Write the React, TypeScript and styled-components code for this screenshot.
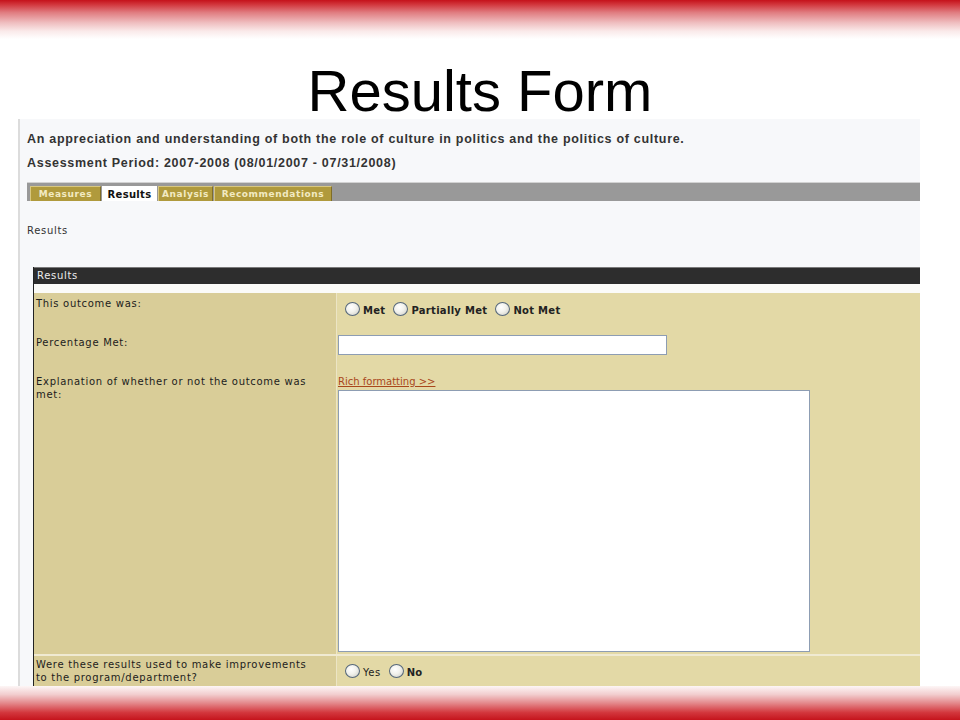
import React from "react";
import styled, { createGlobalStyle } from "styled-components";

const Global = createGlobalStyle`
  html, body { margin: 0; padding: 0; background: #ffffff; }
  body { font-family: "Liberation Sans", Arial, sans-serif; }
`;

const Page = styled.div`
  width: 960px;
  height: 720px;
  display: flex;
  flex-direction: column;
  overflow: hidden;
  background: #ffffff;
`;

const TopBand = styled.div`
  flex: 0 0 39px;
  background: linear-gradient(
    to bottom,
    #c5121b 0%,
    #d2383e 12%,
    #e07c80 32%,
    #efbdbf 58%,
    #faeaea 80%,
    #ffffff 100%
  );
`;

const BottomBand = styled.div`
  flex: 0 0 34px;
  background: linear-gradient(
    to bottom,
    #fdf6f6 0%,
    #f2cdce 25%,
    #e4898c 50%,
    #d3373d 78%,
    #c5141c 100%
  );
`;

const Title = styled.h1`
  margin: 0;
  padding-top: 24px;
  height: 56px;
  line-height: 56px;
  text-align: center;
  font-family: "Liberation Sans", Arial, sans-serif;
  font-weight: normal;
  font-size: 58px;
  color: #000;
`;

const Panel = styled.div`
  flex: 1;
  min-height: 0;
  overflow: hidden;
  margin: 0 40px 0 18px;
  background: #f7f8fa;
  border-left: 2px solid #dcdcdc;
  padding-top: 12px;
`;

const Heading = styled.div<{ $gap?: number }>`
  margin-top: ${(p) => p.$gap ?? 0}px;
  padding-left: 7px;
  font-family: "Liberation Sans", Arial, sans-serif;
  font-weight: bold;
  font-size: 12.5px;
  letter-spacing: 0.7px;
  line-height: 16px;
  color: #333;
  white-space: nowrap;
`;

const TabBar = styled.div`
  margin: 11px 0 0 7px;
  height: 18px;
  border-top: 1px solid #d2d2d2;
  background: #999999;
  display: flex;
  align-items: flex-end;
  gap: 1px;
  padding-left: 3px;
`;

const Tab = styled.div<{ $w: number; $active?: boolean }>`
  width: ${(p) => p.$w}px;
  height: 15px;
  box-sizing: border-box;
  display: flex;
  align-items: center;
  justify-content: center;
  font-family: "DejaVu Sans", Verdana, sans-serif;
  font-weight: bold;
  font-size: ${(p) => (p.$active ? 10 : 9)}px;
  letter-spacing: ${(p) => (p.$active ? 0.3 : 0.6)}px;
  color: ${(p) => (p.$active ? "#111" : "#f2eac2")};
  background: ${(p) => (p.$active ? "#ffffff" : "#b09a3c")};
  border-top: 1px solid ${(p) => (p.$active ? "#ffffff" : "#d8c780")};
  border-left: 1px solid ${(p) => (p.$active ? "#ffffff" : "#d8c780")};
  border-right: 1px solid ${(p) => (p.$active ? "#ffffff" : "#7f6d28")};
`;

const Caption = styled.div`
  margin-top: 23px;
  padding-left: 7px;
  font-family: "DejaVu Sans", Verdana, sans-serif;
  font-size: 10px;
  letter-spacing: 0.7px;
  line-height: 14px;
  color: #333;
`;

const FormTable = styled.div`
  margin: 29px 0 0 13px;
  border-left: 1px solid #222;
`;

const TableHeader = styled.div`
  height: 16px;
  line-height: 16px;
  border-top: 1px solid #7a7a7a;
  background: #2d2d2d;
  padding-left: 3px;
  font-family: "DejaVu Sans", Verdana, sans-serif;
  font-size: 10px;
  letter-spacing: 0.7px;
  color: #ececec;
`;

const HeaderGap = styled.div`
  height: 9px;
  background: #fbfbf8;
`;

const Row = styled.div<{ $h?: number; $divider?: boolean }>`
  display: grid;
  grid-template-columns: 303px 1fr;
  height: ${(p) => (p.$h ? `${p.$h}px` : "auto")};
  border-top: ${(p) => (p.$divider ? "2px solid #f0ead2" : "none")};
`;

const LabelCell = styled.div<{ $pt: number }>`
  background: #d9cd98;
  border-right: 1px solid #ece5c5;
  padding: ${(p) => p.$pt}px 2px 0 2px;
  font-family: "DejaVu Sans", Verdana, sans-serif;
  font-size: 10px;
  letter-spacing: 0.7px;
  line-height: 13px;
  color: #1c1c1c;
`;

const ValueCell = styled.div<{ $pt: number }>`
  background: #e3d9a6;
  padding: ${(p) => p.$pt}px 0 0 1px;
  min-height: 40px;
`;

const RadioGroup = styled.div`
  display: flex;
  align-items: center;
`;

const Radio = styled.input.attrs({ type: "radio" })<{ $first?: boolean }>`
  appearance: none;
  -webkit-appearance: none;
  width: 15px;
  height: 14px;
  margin: 0 3px 0 ${(p) => (p.$first ? 7 : 8)}px;
  border-radius: 50%;
  border: 1px solid #56687c;
  box-sizing: border-box;
  background: radial-gradient(
    circle at 40% 35%,
    #ffffff 0%,
    #f1f1ec 45%,
    #c9c9c0 100%
  );
`;

const RadioText = styled.label<{ $bold?: boolean }>`
  font-family: "DejaVu Sans", Verdana, sans-serif;
  font-size: 10px;
  font-weight: ${(p) => (p.$bold ? "bold" : "normal")};
  letter-spacing: ${(p) => (p.$bold ? 0.3 : 0.5)}px;
  color: #222;
  padding-top: 2px;
`;

const TextInput = styled.input.attrs({ type: "text" })`
  display: block;
  width: 329px;
  height: 20px;
  box-sizing: border-box;
  margin: 0;
  border: 1px solid #8d9db3;
  background: #ffffff;
`;

const RichLink = styled.a`
  display: block;
  width: max-content;
  font-family: "DejaVu Sans", Verdana, sans-serif;
  font-size: 10px;
  line-height: 13px;
  color: #a9471b;
  text-decoration: underline;
  cursor: pointer;
`;

const TextArea = styled.textarea`
  display: block;
  width: 472px;
  height: 262px;
  box-sizing: border-box;
  margin: 2px 0 0 0;
  border: 1px solid #8d9db3;
  background: #ffffff;
  resize: none;
`;

export default function App() {
  return (
    <>
      <Global />
      <Page>
        <TopBand />
        <Title>Results Form</Title>
        <Panel>
          <Heading>
            An appreciation and understanding of both the role of culture in
            politics and the politics of culture.
          </Heading>
          <Heading $gap={8}>
            Assessment Period: 2007-2008 (08/01/2007 - 07/31/2008)
          </Heading>
          <TabBar>
            <Tab $w={71}>Measures</Tab>
            <Tab $w={55} $active>
              Results
            </Tab>
            <Tab $w={55}>Analysis</Tab>
            <Tab $w={118}>Recommendations</Tab>
          </TabBar>
          <Caption>Results</Caption>
          <FormTable>
            <TableHeader>Results</TableHeader>
            <HeaderGap />
            <Row $h={37}>
              <LabelCell $pt={4}>This outcome was:</LabelCell>
              <ValueCell $pt={9}>
                <RadioGroup>
                  <Radio name="outcome" $first />
                  <RadioText $bold>Met</RadioText>
                  <Radio name="outcome" />
                  <RadioText $bold>Partially Met</RadioText>
                  <Radio name="outcome" />
                  <RadioText $bold>Not Met</RadioText>
                </RadioGroup>
              </ValueCell>
            </Row>
            <Row $h={38}>
              <LabelCell $pt={6}>Percentage Met:</LabelCell>
              <ValueCell $pt={5}>
                <TextInput />
              </ValueCell>
            </Row>
            <Row $h={286}>
              <LabelCell $pt={7}>
                Explanation of whether or not the outcome was
                <br />
                met:
              </LabelCell>
              <ValueCell $pt={7}>
                <RichLink>Rich formatting &gt;&gt;</RichLink>
                <TextArea />
              </ValueCell>
            </Row>
            <Row $divider>
              <LabelCell $pt={2}>
                Were these results used to make improvements
                <br />
                to the program/department?
              </LabelCell>
              <ValueCell $pt={8}>
                <RadioGroup>
                  <Radio name="improve" $first />
                  <RadioText>Yes</RadioText>
                  <Radio name="improve" />
                  <RadioText $bold>No</RadioText>
                </RadioGroup>
              </ValueCell>
            </Row>
          </FormTable>
        </Panel>
        <BottomBand />
      </Page>
    </>
  );
}
